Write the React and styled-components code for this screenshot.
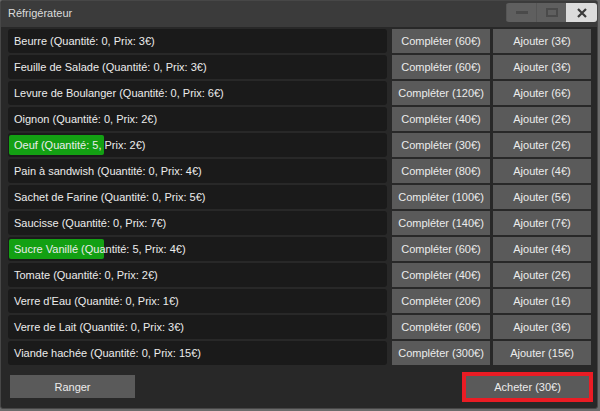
import React from 'react'
import styled, { createGlobalStyle } from 'styled-components'

const GlobalStyle = createGlobalStyle`
  body {
    margin: 0;
    background: #6b6b6b;
    font-family: "Liberation Sans", Arial, sans-serif;
  }
`

const items = [
  { name: 'Beurre', qty: 0, price: 3, complete: 60 },
  { name: 'Feuille de Salade', qty: 0, price: 3, complete: 60 },
  { name: 'Levure de Boulanger', qty: 0, price: 6, complete: 120 },
  { name: 'Oignon', qty: 0, price: 2, complete: 40 },
  { name: 'Oeuf', qty: 5, price: 2, complete: 30 },
  { name: 'Pain à sandwish', qty: 0, price: 4, complete: 80 },
  { name: 'Sachet de Farine', qty: 0, price: 5, complete: 100 },
  { name: 'Saucisse', qty: 0, price: 7, complete: 140 },
  { name: 'Sucre Vanillé', qty: 5, price: 4, complete: 60 },
  { name: 'Tomate', qty: 0, price: 2, complete: 40 },
  { name: "Verre d'Eau", qty: 0, price: 1, complete: 20 },
  { name: 'Verre de Lait', qty: 0, price: 3, complete: 60 },
  { name: 'Viande hachée', qty: 0, price: 15, complete: 300 },
]

const MAX_QTY = 20

const App = () => {
  return (
    <>
      <GlobalStyle />
      <Window>
        <TitleBar>
          <Title>Réfrigérateur</Title>
          <WinButtons>
            <WinButton>
              <svg width="12" height="4" viewBox="0 0 12 4">
                <rect x="0" y="0" width="12" height="3" fill="#4a4a4a" />
              </svg>
            </WinButton>
            <WinButton>
              <svg width="12" height="9" viewBox="0 0 12 9">
                <rect x="1" y="1" width="10" height="7" fill="none" stroke="#4a4a4a" strokeWidth="2" />
              </svg>
            </WinButton>
            <WinButton $close>
              <svg width="10" height="10" viewBox="0 0 10 10">
                <path d="M1 1 L9 9 M9 1 L1 9" stroke="#3a3a3a" strokeWidth="2.2" />
              </svg>
            </WinButton>
          </WinButtons>
        </TitleBar>

        <List>
          {items.map(({ name, qty, price, complete }) => (
            <Row key={name}>
              <Label>
                {qty > 0 && <Fill style={{ width: `${(qty / MAX_QTY) * 100}%` }} />}
                <LabelText>
                  {name} (Quantité: {qty}, Prix: {price}€)
                </LabelText>
              </Label>
              <Button>Compléter ({complete}€)</Button>
              <Button>Ajouter ({price}€)</Button>
            </Row>
          ))}
        </List>

        <Footer>
          <Button $wide>Ranger</Button>
          <Highlight>
            <Button $buy>Acheter (30€)</Button>
          </Highlight>
        </Footer>
      </Window>
    </>
  )
}

export default App

const Window = styled.div`
  width: 598px;
  height: 409px;
  box-sizing: border-box;
  background: #282828;
  border: 1px solid #474747;
  border-radius: 3px;
  display: flex;
  flex-direction: column;
  overflow: hidden;
`

const TitleBar = styled.div`
  height: 26px;
  flex-shrink: 0;
  background: #3b3b3b;
  display: flex;
  align-items: flex-start;
  justify-content: space-between;
  padding-left: 7px;
`

const Title = styled.div`
  color: #dcdcdc;
  font-size: 11px;
  line-height: 25px;
`

const WinButtons = styled.div`
  display: flex;
  margin-top: 2px;
  border-radius: 3px;
  overflow: hidden;
`

const WinButton = styled.div`
  width: ${({ $close }) => ($close ? '31px' : '29px')};
  height: 19px;
  background: ${({ $close }) => ($close ? '#dcdcdc' : '#5f5f5f')};
  border-left: ${({ $close }) => ($close ? 'none' : '1px solid #555')};
  display: flex;
  align-items: center;
  justify-content: center;
`

const List = styled.div`
  display: flex;
  flex-direction: column;
  gap: 2px;
  padding: 2px 0 0 7px;
`

const Row = styled.div`
  display: grid;
  grid-template-columns: 381px 98px 98px;
  column-gap: 3px;
  height: 24px;
`

const Label = styled.div`
  position: relative;
  background: #1a1a1a;
  border-radius: 3px;
  margin-right: 2px;
  display: flex;
  align-items: center;
  overflow: hidden;
`

const Fill = styled.div`
  position: absolute;
  left: 1px;
  top: 2px;
  bottom: 2px;
  background: #13a013;
  border-radius: 2px;
`

const LabelText = styled.span`
  position: relative;
  color: #ececec;
  font-size: 11px;
  padding-left: 6px;
  white-space: nowrap;
`

const Button = styled.div`
  background: #5a5a5a;
  color: #ececec;
  font-size: 11px;
  display: flex;
  align-items: center;
  justify-content: center;
  white-space: nowrap;
  width: ${({ $wide, $buy }) => ($wide ? '125px' : $buy ? '123px' : 'auto')};
  height: ${({ $wide, $buy }) => ($wide ? '23px' : $buy ? '22px' : 'auto')};
`

const Footer = styled.div`
  flex: 1;
  display: flex;
  align-items: center;
  justify-content: space-between;
  padding: 0 4px 0 9px;
`

const Highlight = styled.div`
  border: 4px solid #ea1c24;
  display: flex;
`
